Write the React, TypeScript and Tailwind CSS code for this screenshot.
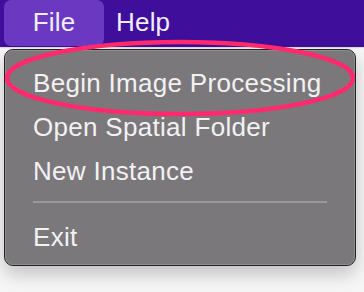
import React from 'react';

const items = ['Begin Image Processing', 'Open Spatial Folder', 'New Instance'];

export default function App() {
  return (
    <div
      className="relative w-[364px] h-[292px] overflow-hidden bg-[#f6f6f6]"
      style={{ fontFamily: '"Liberation Sans", Arial, sans-serif' }}
    >
      {/* menu bar */}
      <div className="flex h-[47px] bg-[#3f0e9b] text-[26px] tracking-[0.2px] text-[#f1eef8]">
        <div className="ml-[4px] flex h-[46px] w-[100px] items-center justify-center rounded-[7px] bg-[#6a38c1] pb-[2px]">
          File
        </div>
        <div className="flex h-[46px] items-center pb-[2px] pl-[12px]">Help</div>
      </div>
      <div className="h-[2px] border-t border-[#dcdcdc] bg-[#f3f3f3]" />

      {/* dropdown */}
      <div className="ml-[4px] w-[352px] rounded-[9px] border border-[#232323] bg-[#7b787c] shadow-[0_8px_18px_rgba(0,0,0,0.22)]">
        <div className="rounded-[8px] border border-[#8f8c90] px-[27px] pb-[5px] pt-[10px] text-[26px] tracking-[0.3px] text-[#f2f2f2]">
          {items.map((t) => (
            <div key={t} className="flex h-[44px] items-center">
              {t}
            </div>
          ))}
          <div className="mb-[12px] mt-[8px] h-[2px] bg-[#9c999d]" />
          <div className="flex h-[44px] items-center">Exit</div>
        </div>
      </div>

      {/* annotation ellipse */}
      <svg className="pointer-events-none absolute left-0 top-0" width="364" height="292">
        <ellipse cx="180" cy="78" rx="173" ry="36" fill="none" stroke="#ff2a6d" strokeWidth="4.5" />
      </svg>
    </div>
  );
}
